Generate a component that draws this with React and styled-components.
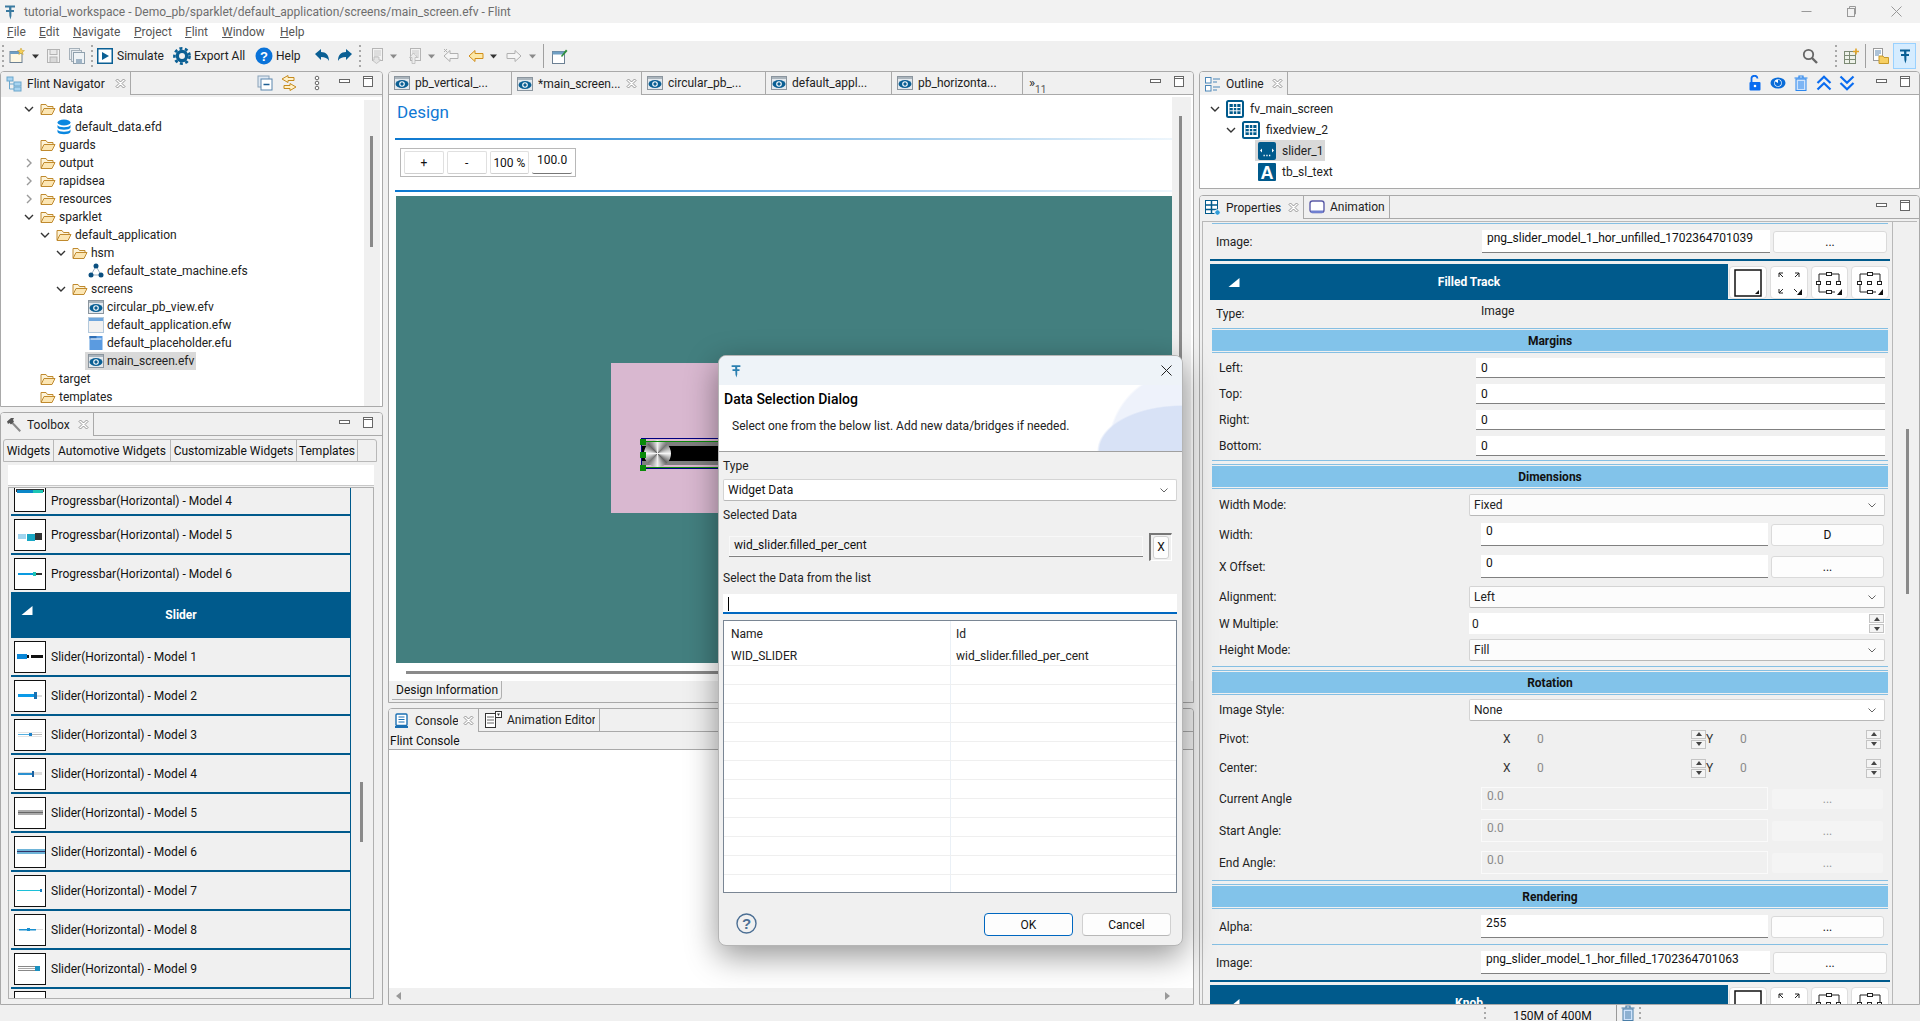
import React from 'react';
import styled, { createGlobalStyle } from 'styled-components';

const Global = createGlobalStyle`
  html, body { margin: 0; padding: 0; background: #f0f0f0; }
  body { font-family: Roboto, "Open Sans", "Liberation Sans", sans-serif; font-size: 12px; color: #111; }
  * { box-sizing: border-box; }
`

const BLUE = '#005a8c';

// ---- icons ----
const Svg = ({ s = 16, w, h, vb = '0 0 16 16', children }) => (
  <svg width={w || s} height={h || s} viewBox={vb} style={{ flex: 'none', display: 'block' }}>{children}</svg>
);
const FLogo = ({ s = 16, c = '#2a7fb0' }) => (
  <Svg s={s}>
    <path d="M3 1.5h10v2H3zM4 6h8v2H4zM7 3h2.4v9L8.4 15.5 7.4 12z" fill={c} />
  </Svg>
);
const Folder = () => (
  <Svg>
    <path d="M1 13V3.5h5l1.5 2h5.5V8" fill="#fdf3d8" stroke="#c08a2e" />
    <path d="M1 13.5l3-6h11l-3 6z" fill="#fce6b3" stroke="#c08a2e" />
  </Svg>
);
const EyeFile = () => (
  <Svg>
    <rect x=".5" y="1.5" width="15" height="13" fill="#e4e9ee" stroke="#8b959e" />
    <rect x="1" y="2" width="14" height="2" fill="#aab4bc" />
    <ellipse cx="8" cy="9" rx="6.5" ry="4" fill="#0a5f94" />
    <circle cx="8" cy="9" r="2.8" fill="#fff" />
    <circle cx="8" cy="9" r="1.7" fill="#0a5f94" />
  </Svg>
);
const Database = () => (
  <Svg>
    <ellipse cx="8" cy="3.5" rx="6.5" ry="3" fill="#0a87e0" />
    <path d="M1.5 6c1 3 12 3 13 0v2.5c-1 3-12 3-13 0zM1.5 10.5c1 3 12 3 13 0V13c-1 3-12 3-13 0z" fill="#0a87e0" />
  </Svg>
);
const StateMachine = () => (
  <Svg>
    <path d="M8 3L3 12h10z" fill="none" stroke="#9db3c4" />
    <circle cx="8" cy="3" r="2.5" fill="#0a4f80" />
    <circle cx="3" cy="12" r="2.5" fill="#0a4f80" />
    <circle cx="13" cy="12" r="2.5" fill="#0a4f80" />
  </Svg>
);
const WindowFile = () => (
  <Svg>
    <rect x=".5" y=".5" width="15" height="15" fill="#f1f1f1" stroke="#b4c9dc" />
    <rect x="1" y="1" width="14" height="3" fill="#6ea6dd" />
  </Svg>
);
const PlaceholderFile = () => (
  <Svg>
    <rect x="1.5" y="1" width="13" height="14" fill="#5b9be0" />
    <rect x="1.5" y="1" width="7" height="2.5" fill="#2f6fb5" />
    <rect x="2.5" y="3.5" width="11" height="1" fill="#fff" />
  </Svg>
);
const NavTitleIcon = () => (
  <Svg>
    <rect x="1" y="1" width="6" height="4" fill="#a8d4f0" stroke="#6aa6cc" />
    <rect x="8" y="6" width="7" height="4" fill="#a8d4f0" stroke="#6aa6cc" />
    <rect x="8" y="11" width="7" height="4" fill="#a8d4f0" stroke="#6aa6cc" />
    <path d="M3.5 5v8H8M3.5 8H8" fill="none" stroke="#6aa6cc" />
  </Svg>
);
const CloseX = () => (
  <Svg s={11} vb="0 0 11 11">
    <path d="M1 2.5L2.5 1 5.5 4 8.5 1 10 2.5 7 5.5l3 3L8.5 10l-3-3-3 3L1 8.5l3-3z" fill="#fff" stroke="#8a8a8a" strokeWidth=".9" />
  </Svg>
);
const MinIcon = () => (
  <Svg s={12} vb="0 0 12 12"><rect x=".5" y="3.5" width="10" height="3" fill="#fff" stroke="#666" /></Svg>
);
const MaxIcon = () => (
  <Svg s={12} vb="0 0 12 12"><rect x="1.5" y=".5" width="9" height="10" fill="#fff" stroke="#666" /><path d="M1.5 2.5h9" stroke="#666" /></Svg>
);
const ArrowDown = () => (
  <Svg s={10} vb="0 0 10 10"><path d="M1 3l4 4 4-4" fill="none" stroke="#333" strokeWidth="1.4" /></Svg>
);
const ArrowRight = () => (
  <Svg s={10} vb="0 0 10 10"><path d="M3 1l4 4-4 4" fill="none" stroke="#9a9a9a" strokeWidth="1.4" /></Svg>
);
const Caret = () => (
  <Svg w={7} h={5} vb="0 0 7 5"><path d="M0 .5h7L3.5 4.5z" fill="#333" /></Svg>
);
const GreyCaret = () => (
  <Svg w={7} h={5} vb="0 0 7 5"><path d="M0 .5h7L3.5 4.5z" fill="#8a8a8a" /></Svg>
);
const NewFile = () => (
  <Svg>
    <rect x="1" y="3.5" width="12" height="11" fill="#fff8e2" stroke="#6c8093" />
    <rect x="1" y="3.5" width="12" height="2.5" fill="#6f9fc4" />
    <path d="M12 0l1 2.4 2.5.2-2 1.6.7 2.4-2.2-1.4-2.2 1.4.7-2.4-2-1.6 2.5-.2z" fill="#f6cf57" stroke="#c69c28" strokeWidth=".5" />
  </Svg>
);
const Save = ({ x = 1 }) => (
  <g fill="#f2f2f2" stroke="#b3b3b3">
    <rect x={x + .5} y="1.5" width="12" height="13" />
    <rect x={x + 3} y="1.5" width="7" height="5" fill="#e8e8e8" />
    <rect x={x + 3} y="9" width="7" height="5.5" fill="#d8d8d8" />
  </g>
);
const SaveIcon = () => <Svg><Save /></Svg>;
const SaveAll = () => (
  <Svg>
    <rect x=".5" y=".5" width="10" height="11" fill="#e7ecf0" stroke="#a6b1ba" />
    <rect x="2.5" y="2.5" width="10" height="11" fill="#e7ecf0" stroke="#a6b1ba" />
    <rect x="4.5" y="4.5" width="11" height="11" fill="#eef2f5" stroke="#8fa0ad" />
    <rect x="7" y="11" width="6" height="4.5" fill="#9fb4c6" />
  </Svg>
);
const PlayBox = () => (
  <Svg>
    <rect x=".75" y=".75" width="14.5" height="14.5" fill="#fff" stroke="#0a5f94" strokeWidth="1.5" />
    <path d="M5 4l7 4-7 4z" fill="#0a5f94" />
  </Svg>
);
const Gear = () => (
  <Svg s={18} vb="0 0 18 18">
    <circle cx="9" cy="9" r="7.6" fill="none" stroke="#0a5f94" strokeWidth="2.6" strokeDasharray="3 2.5" />
    <circle cx="9" cy="9" r="6.3" fill="#0a5f94" />
    <circle cx="9" cy="9" r="3" fill="#f0f0f0" />
  </Svg>
);
const HelpRound = () => (
  <Svg s={18} vb="0 0 18 18">
    <circle cx="9" cy="9" r="8.5" fill="#0a73d9" />
    <text x="9" y="13.6" textAnchor="middle" fontSize="13" fontWeight="700" fontFamily="Liberation Sans" fill="#fff">?</text>
  </Svg>
);
const Undo = ({ flip }) => (
  <Svg>
    <g transform={flip ? 'translate(16 0) scale(-1 1)' : undefined}>
      <path d="M1 6l6-5v3c5 0 8 3 8 9-1.600-3-4-4-8-4v3z" fill="#0a5f94" />
    </g>
  </Svg>
);
const DimDoc = () => (
  <Svg>
    <rect x="3.500" y=".5" width="10" height="12" fill="#f3f3f3" stroke="#b5b5b5" />
    <path d="M5 3h7M5 5h7M5 7h7M5 9h4" stroke="#c8c8c8" />
    <path d="M5 9h5v3h2l-4.500 3.500L3 12h2z" fill="#e4e4e4" stroke="#b5b5b5" strokeWidth=".7" />
  </Svg>
);
const DimUp = () => (
  <Svg>
    <rect x="4.500" y=".5" width="10" height="12" fill="#f3f3f3" stroke="#b5b5b5" />
    <path d="M6 3h7M6 5h7M10 7h3M10 9h3" stroke="#c8c8c8" />
    <path d="M6 15.500v-6H3.500L7.500 5l4 4.500H9v6z" fill="#ececec" stroke="#b5b5b5" strokeWidth=".7" />
  </Svg>
);
const ArrowShape = ({ fill, stroke, right, tick }) => (
  <Svg>
    <g transform={right ? 'translate(16 0) scale(-1 1)' : undefined}>
      <path d="M1 8l6-5.500V5.500h8v5H7v3z" fill={fill} stroke={stroke} />
      {tick && <path d="M1 1l3 3M4 1L1 4" stroke={stroke} />}
    </g>
  </Svg>
);
const NewWindow = () => (
  <Svg>
    <rect x=".5" y="3.500" width="12" height="12" fill="#fff" stroke="#6c8093" />
    <rect x=".5" y="3.500" width="12" height="3" fill="#6f9fc4" />
    <path d="M9 8l5-6.500 1.500 1.500L10 9z" fill="#2f8f3e" />
  </Svg>
);
const Search = () => (
  <Svg>
    <circle cx="6.500" cy="6.500" r="4.700" fill="none" stroke="#666" strokeWidth="1.800" />
    <path d="M10 10l5 5" stroke="#666" strokeWidth="2.400" />
  </Svg>
);
const TableStar = () => (
  <Svg>
    <rect x=".5" y="3.500" width="11" height="12" fill="#eef2ea" stroke="#7d8b75" />
    <path d="M.5 7.500h11M.5 11.500h11M5.500 3.500v12" stroke="#7d8b75" />
    <path d="M12 .5v6M9 3.500h6" stroke="#e0a52a" strokeWidth="1.600" />
  </Svg>
);
const DocFolder = () => (
  <Svg>
    <rect x=".5" y=".5" width="9" height="12" fill="#fff" stroke="#9a9a9a" />
    <path d="M2 3h6M2 5h6M2 7h4" stroke="#5b86b0" />
    <path d="M6 8h4l1 1.500h4.500v6H6z" fill="#f7cf62" stroke="#c79a2a" />
  </Svg>
);
const SquareTree = () => (
  <Svg>
    <rect x=".5" y="1.500" width="5.500" height="5.500" fill="#fff" stroke="#4b86b8" />
    <rect x=".5" y="9.500" width="5.500" height="5.500" fill="#fff" stroke="#4b86b8" />
    <path d="M8 3h7M8 6h4M8 11h7M8 14h4" stroke="#4b86b8" />
  </Svg>
);
const ConsoleIcon = () => (
  <Svg>
    <rect x="2" y="1" width="11" height="11.500" rx="1" fill="#fff" stroke="#1a6fb3" strokeWidth="1.400" />
    <path d="M4.500 4h6M4.500 6.500h6M4.500 9h6" stroke="#1a6fb3" />
    <rect x="1" y="13" width="13" height="2" fill="#1a6fb3" />
  </Svg>
);
const AnimEditor = () => (
  <Svg s={18} vb="0 0 18 18">
    <rect x="1.500" y="2.500" width="10" height="14" fill="#fff" stroke="#333" />
    <path d="M3 6h7M3 9h7M3 12h7" stroke="#666" />
    <rect x="11.500" y=".5" width="6" height="6" fill="#fff" stroke="#333" />
    <path d="M13 2.500h3L14.500 5z" fill="#333" />
  </Svg>
);
const PropsIcon = () => (
  <Svg>
    <rect x=".5" y=".5" width="12" height="13" fill="#fff" stroke={BLUE} />
    <path d="M.5 5h12M.5 9.500h12M6.500.5v13" stroke={BLUE} strokeWidth="1.500" />
    <circle cx="12.500" cy="12.500" r="2.800" fill="#2f9bd8" stroke="#fff" />
  </Svg>
);
const AnimTab = () => (
  <Svg>
    <rect x="1" y="2" width="14" height="11.500" rx="2.500" fill="#fff" stroke="#5c5ca8" strokeWidth="1.400" />
    <rect x="2" y="11.500" width="12" height="2.500" fill="#6f7fd0" />
  </Svg>
);
const Hammer = () => (
  <Svg>
    <path d="M6 4l9 9.500-1.500 1.500L4.500 5.500z" fill="#8a8a8a" />
    <path d="M1 4.500L5 1h3L7 3l1 1.500L5 7.500 3.500 6 2 7z" fill="#555" />
  </Svg>
);
const CollapseAll = () => (
  <Svg>
    <rect x="1" y="1" width="11" height="11" fill="#dfe9f3" stroke="#8aa2b8" />
    <rect x="4" y="4" width="11" height="11" fill="#fff" stroke="#5a86ad" />
    <path d="M6.500 9.500h6" stroke="#1f5f94" strokeWidth="1.400" />
  </Svg>
);
const LinkEditor = () => (
  <Svg>
    <path d="M7 .5L1 4l6 3.500V5.500h6v-3H7z" fill="#fff1c9" stroke="#c58b1f" />
    <path d="M9 8.500l6 3.500-6 3.500v-2H3v-3h6z" fill="#fff1c9" stroke="#c58b1f" />
  </Svg>
);
const ViewMenu = () => (
  <Svg>
    <circle cx="8" cy="3" r="1.800" fill="#fff" stroke="#666" />
    <circle cx="8" cy="8" r="1.800" fill="#fff" stroke="#666" />
    <circle cx="8" cy="13" r="1.800" fill="#fff" stroke="#666" />
  </Svg>
);
const Lock = () => (
  <Svg>
    <path d="M4.500 7V4a3 3 0 0 1 6-.5" fill="none" stroke="#0a6cf0" strokeWidth="1.800" />
    <rect x="2.500" y="7" width="11" height="8.500" rx="1" fill="#0a6cf0" />
    <circle cx="8" cy="11" r="1.300" fill="#fff" />
  </Svg>
);
const EyeBlue = () => (
  <Svg>
    <ellipse cx="8" cy="8" rx="7.500" ry="5.500" fill="#0a6cd8" />
    <circle cx="8" cy="8" r="3.800" fill="#fff" />
    <path d="M8 4.800a3.200 3.200 0 1 1-2.800 1.700L8 8z" fill="#0a6cd8" />
  </Svg>
);
const TrashBlue = ({ c = '#2b86ee' }) => (
  <Svg>
    <path d="M1.500 3h13M6 3V1h4v2" fill="none" stroke={c} strokeWidth="1.200" />
    <rect x="3" y="4" width="10" height="11.500" fill="#cfe3fb" stroke={c} />
    <path d="M6 6v8M8 6v8M10 6v8" stroke={c} />
  </Svg>
);
const Chevrons = ({ down }) => (
  <Svg>
    <g transform={down ? 'translate(0 16) scale(1 -1)' : undefined} fill="none" stroke="#0a6cf0" strokeWidth="2.200">
      <path d="M1.500 8L8 1.800 14.500 8M1.500 14.500L8 8.300l6.500 6.200" />
    </g>
  </Svg>
);
const GridBlue = () => (
  <Svg s={18} vb="0 0 18 18">
    <rect x="1" y="1" width="16" height="16" rx="1.500" fill="#fff" stroke={BLUE} strokeWidth="2" />
    <path d="M3.500 4h11v10h-11z" fill={BLUE} />
    <path d="M3.500 7.500h11M3.500 10.800h11M7.300 4v10M10.800 4v10" stroke="#fff" />
  </Svg>
);
const SliderGlyph = () => (
  <Svg s={18} vb="0 0 18 18">
    <rect x="0" y="0" width="18" height="18" rx="2" fill={BLUE} />
    <path d="M4 6.500L2 8.500l2 2zM14 6.500l2 2-2 2z" fill="#fff" />
    <path d="M5.500 13.500h1.300M8.300 13.500h1.300M11 13.500h1.300" stroke="#fff" strokeWidth="1.500" />
  </Svg>
);
const TextGlyph = () => (
  <Svg s={18} vb="0 0 18 18">
    <rect x="0" y="0" width="18" height="18" rx="1" fill={BLUE} />
    <text x="9" y="16" textAnchor="middle" fontSize="18" fontWeight="700" fontFamily="Liberation Sans" fill="#fff">A</text>
  </Svg>
);
const ComboChevron = () => (
  <Svg s={10} vb="0 0 10 10"><path d="M1.500 3.500L5 7l3.500-3.500" fill="none" stroke="#666" /></Svg>
);
const WhiteCorner = () => (
  <Svg s={12} vb="0 0 12 12"><path d="M11.500 2v9H.5z" fill="#fff" /></Svg>
);
const ModeBlank = () => (
  <Svg s={28} vb="0 0 28 28">
    <rect x="1" y="1" width="26" height="26" fill="#fff" stroke="#111" strokeWidth="1.500" />
    <path d="M25 21v4h-4z" fill="#111" />
  </Svg>
);
const ModeExpand = () => (
  <Svg s={28} vb="0 0 28 28">
    <path d="M8 8l-4-4M4 8V4h4M20 8l4-4M20 4h4v4M8 20l-4 4M4 20v4h4M19 20l3 3" fill="none" stroke="#222" />
    <path d="M27 20v6h-5z" fill="#111" />
  </Svg>
);
const ModeAlign = () => (
  <Svg s={28} vb="0 0 28 28">
    <path d="M4 12V5h7M17 5h7v7M4 16v7h7M17 23h3" fill="none" stroke="#222" />
    <rect x="11.500" y="3.500" width="5" height="3" fill="#fff" stroke="#222" />
    <rect x="1.500" y="12.500" width="4" height="3" fill="#fff" stroke="#222" />
    <rect x="11.500" y="12.500" width="4" height="3" fill="#fff" stroke="#222" />
    <rect x="21.500" y="12.500" width="4" height="3" fill="#fff" stroke="#222" />
    <rect x="11.500" y="21.500" width="5" height="3" fill="#fff" stroke="#222" />
    <path d="M27 20v6h-5z" fill="#111" />
  </Svg>
);
const HelpOutline = () => (
  <Svg s={21} vb="0 0 21 21">
    <circle cx="10.500" cy="10.500" r="9.500" fill="none" stroke="#4c6f94" strokeWidth="1.400" />
    <text x="10.500" y="16" textAnchor="middle" fontSize="15" fontWeight="700" fontFamily="Liberation Sans" fill="#4c6f94">?</text>
  </Svg>
);
const DialogClose = () => (
  <Svg s={11} vb="0 0 11 11"><path d="M.5.500l10 10M10.500.500l-10 10" stroke="#222" /></Svg>
);
const WinMin = () => <Svg s={11} vb="0 0 11 11"><path d="M.5 5.500h10" stroke="#999" /></Svg>;
const WinRestore = () => (
  <Svg s={11} vb="0 0 11 11"><rect x="1.500" y="2.500" width="7" height="8" fill="none" stroke="#999" /><path d="M3.500 2.500V.5h6v7.500H8.500" fill="none" stroke="#999" /></Svg>
);
const WinClose = () => <Svg s={11} vb="0 0 11 11"><path d="M.5.500l10 10M10.500.500l-10 10" stroke="#999" /></Svg>;

const Thumb = ({ parts }) => (
  <ThumbBox>
    <svg width="30" height="30" viewBox="0 0 30 30">
      {parts.map((r, i) => <rect key={i} x={r[0]} y={r[1]} width={r[2]} height={r[3]} fill={r[4]} />)}
    </svg>
  </ThumbBox>
);

// ---- data ----
const treeRows = [
  { t: 'data', l: 0, open: true, icon: <Folder /> },
  { t: 'default_data.efd', l: 1, icon: <Database /> },
  { t: 'guards', l: 0, icon: <Folder />, leaf: true },
  { t: 'output', l: 0, closed: true, icon: <Folder /> },
  { t: 'rapidsea', l: 0, closed: true, icon: <Folder /> },
  { t: 'resources', l: 0, closed: true, icon: <Folder /> },
  { t: 'sparklet', l: 0, open: true, icon: <Folder /> },
  { t: 'default_application', l: 1, open: true, icon: <Folder /> },
  { t: 'hsm', l: 2, open: true, icon: <Folder /> },
  { t: 'default_state_machine.efs', l: 3, icon: <StateMachine /> },
  { t: 'screens', l: 2, open: true, icon: <Folder /> },
  { t: 'circular_pb_view.efv', l: 3, icon: <EyeFile /> },
  { t: 'default_application.efw', l: 3, icon: <WindowFile /> },
  { t: 'default_placeholder.efu', l: 3, icon: <PlaceholderFile /> },
  { t: 'main_screen.efv', l: 3, icon: <EyeFile />, sel: true },
  { t: 'target', l: 0, icon: <Folder /> },
  { t: 'templates', l: 0, icon: <Folder /> },
  { t: '', l: 0, icon: <Folder /> },
];

const pb4 = [[1, 8, 28, 3, '#333'], [2, 9, 18, 3, '#0a87c8'], [18, 9, 10, 3, '#1cc5b5']];
const widgetsTop = [
  { t: 'Progressbar(Horizontal) - Model 5', parts: [[3, 14, 8, 5, '#9fd4ef'], [12, 14, 8, 7, '#18a7c4'], [20, 13, 7, 7, '#333']] },
  { t: 'Progressbar(Horizontal) - Model 6', parts: [[3, 14, 18, 2, '#0a9ae0'], [18, 13, 3, 4, '#1cc5b5'], [21, 14, 6, 2, '#333']] },
];
const sliders = [
  { parts: [[2, 13, 26, 3, '#111'], [2, 12, 10, 5, '#0a87d8'], [14, 12, 2, 5, '#fff']] },
  { parts: [[3, 14, 24, 2, '#ddd'], [3, 13, 17, 3, '#0a9ae8'], [19, 11, 3, 7, '#1a70b0']] },
  { parts: [[3, 14, 24, 1, '#bbb'], [3, 12, 24, 1, '#e4e4e4'], [3, 16, 24, 1, '#e4e4e4'], [14, 13, 3, 3, '#1a80c8'], [3, 14, 11, 1, '#55b0e0']] },
  { parts: [[3, 13, 24, 3, '#ddd'], [3, 14, 15, 2, '#2a90d0'], [17, 12, 2, 6, '#1a60a0']] },
  { parts: [[3, 12, 25, 5, '#aaa'], [3, 14, 25, 1, '#666']] },
  { parts: [[2, 12, 28, 5, '#6eb4d8'], [2, 14, 28, 1, '#336']] },
  { parts: [[2, 14, 25, 1, '#1cc0d8'], [25, 13, 2, 3, '#1a80c0']] },
  { parts: [[2, 14, 26, 1, '#ddd'], [4, 14, 17, 1.500, '#1a90d0'], [12, 13, 3, 3, '#1a90d0']] },
  { parts: [[3, 12, 18, 1, '#888'], [3, 16, 18, 1, '#888'], [3, 14, 22, 1, '#aaa'], [20, 12, 5, 5, '#1a90c0']] },
];

const tableRows = Array.from({ length: 13 });

// ---- page ----
export default function App() {
  return (
    <Page>
      <Global />
      <TitleBar>
        <FLogo c="#3a7aa0" />
        <TitleText>tutorial_workspace - Demo_pb/sparklet/default_application/screens/main_screen.efv - Flint</TitleText>
        <WinButtons><WinMin /><WinRestore /><WinClose /></WinButtons>
      </TitleBar>
      <MenuBar>
        {['File', 'Edit', 'Navigate', 'Project', 'Flint', 'Window', 'Help'].map((m, i) => (
          <MenuItem key={m} $w={[32, 34, 61, 51, 37, 58, 30][i]}>{m}</MenuItem>
        ))}
      </MenuBar>
      <Toolbar>
        <Tool $ml={2}><Grip /></Tool>
        <Tool $ml={5}><NewFile /></Tool>
        <Tool $ml={7}><Caret /></Tool>
        <Tool $ml={7}><SaveIcon /></Tool>
        <Tool $ml={7}><SaveAll /></Tool>
        <Tool $ml={6}><Grip /></Tool>
        <Tool $ml={4}><PlayBox /></Tool>
        <ToolLabel $ml={4} $w={48}>Simulate</ToolLabel>
        <Tool $ml={8}><Gear /></Tool>
        <ToolLabel $ml={3} $w={52}>Export All</ToolLabel>
        <Tool $ml={9}><HelpRound /></Tool>
        <ToolLabel $ml={3} $w={28}>Help</ToolLabel>
        <Tool $ml={10}><Undo /></Tool>
        <Tool $ml={7}><Undo flip /></Tool>
        <Tool $ml={6}><Grip /></Tool>
        <Tool $ml={8}><DimDoc /></Tool>
        <Tool $ml={5}><GreyCaret /></Tool>
        <Tool $ml={9}><DimUp /></Tool>
        <Tool $ml={6}><GreyCaret /></Tool>
        <Tool $ml={8}><ArrowShape fill="#f5f5f5" stroke="#b0b0b0" tick /></Tool>
        <Tool $ml={9}><ArrowShape fill="#fde9a8" stroke="#d18f1c" /></Tool>
        <Tool $ml={6}><Caret /></Tool>
        <Tool $ml={9}><ArrowShape fill="#f5f5f5" stroke="#b0b0b0" right /></Tool>
        <Tool $ml={7}><GreyCaret /></Tool>
        <ToolSep $ml={7} />
        <Tool $ml={8}><NewWindow /></Tool>
        <ToolRight>
          <Tool $ml={0}><Search /></Tool>
          <Tool $ml={17}><Grip /></Tool>
          <Tool $ml={7}><TableStar /></Tool>
          <ToolSep $ml={5} />
          <Tool $ml={7}><DocFolder /></Tool>
          <ActivePerspective><FLogo c="#0a5f94" /></ActivePerspective>
        </ToolRight>
      </Toolbar>

      <Workspace>
        <Column $w={383}>
          <Panel $h={336}>
            <TabBar>
              <Tab $w={130} $active><NavTitleIcon /><TabText>Flint Navigator</TabText><CloseX /></Tab>
              <TabTools>
                <Tool $ml={0}><CollapseAll /></Tool>
                <Tool $ml={8}><LinkEditor /></Tool>
                <Tool $ml={12}><ViewMenu /></Tool>
                <MinMax><MinIcon /><MaxIcon /></MinMax>
              </TabTools>
            </TabBar>
            <ScrollArea $pt={3}>
              <TreeList>
                {treeRows.map((r, i) => (
                  <TreeRow key={i} $l={r.l} $h={18}>
                    <ArrowSlot>
                      {r.open && <ArrowDown />}
                      {r.closed && <ArrowRight />}
                    </ArrowSlot>
                    <RowBody $sel={r.sel}>{r.icon}<span>{r.t}</span></RowBody>
                  </TreeRow>
                ))}
              </TreeList>
              <ScrollGutter $w={16}><VThumb $mt={36} $h={111} /></ScrollGutter>
            </ScrollArea>
          </Panel>

          <Panel $h={593}>
            <TabBar>
              <Tab $w={93} $active><Hammer /><TabText>Toolbox</TabText><CloseX /></Tab>
              <TabTools><MinMax><MinIcon /><MaxIcon /></MinMax></TabTools>
            </TabBar>
            <ToolboxBody>
              <PaletteTabs>
                <PaletteTab $w={50} $active>Widgets</PaletteTab>
                <PaletteTab $w={117}>Automotive Widgets</PaletteTab>
                <PaletteTab $w={126}>Customizable Widgets</PaletteTab>
                <PaletteTab $w={61}>Templates</PaletteTab>
              </PaletteTabs>
              <PaletteSearch />
              <PaletteList>
                <PaletteItems>
                  <PartialItem $first>
                    <PartialThumb $first><svg width="30" height="20" viewBox="0 0 30 20">{pb4.map((r, i) => <rect key={i} x={r[0]} y={r[1] - 7} width={r[2]} height={r[3]} fill={r[4]} />)}</svg></PartialThumb>
                    <ItemText>Progressbar(Horizontal) - Model 4</ItemText>
                  </PartialItem>
                  {widgetsTop.map(w => (
                    <Item key={w.t}><Thumb parts={w.parts} /><ItemText>{w.t}</ItemText></Item>
                  ))}
                  <GroupHeader><CornerSlot><WhiteCorner /></CornerSlot>Slider</GroupHeader>
                  {sliders.map((s, i) => (
                    <Item key={i}><Thumb parts={s.parts} /><ItemText>Slider(Horizontal) - Model {i + 1}</ItemText></Item>
                  ))}
                  <PartialItem><PartialThumb><svg width="30" height="8" viewBox="0 0 30 8"><rect x="14" y="3" width="3" height="5" fill="#1a80c8" /></svg></PartialThumb></PartialItem>
                </PaletteItems>
                <ScrollGutter $w={20}><VThumb $mt={294} $h={60} $ml={9} /></ScrollGutter>
              </PaletteList>
            </ToolboxBody>
          </Panel>
        </Column>

        <Column $w={806}>
          <Panel $h={632}>
            <TabBar>
              <Tab $w={123}><EyeFile /><TabText>pb_vertical_...</TabText></Tab>
              <Tab $w={130} $active><EyeFile /><TabText>*main_screen...</TabText><CloseX /></Tab>
              <Tab $w={124}><EyeFile /><TabText>circular_pb_...</TabText></Tab>
              <Tab $w={126}><EyeFile /><TabText>default_appl...</TabText></Tab>
              <Tab $w={131}><EyeFile /><TabText>pb_horizonta...</TabText></Tab>
              <Overflow>»<sub>11</sub></Overflow>
              <TabTools><MinMax><MinIcon /><MaxIcon /></MinMax></TabTools>
            </TabBar>
            <EditorBody>
              <EditorMain>
                <DesignTitle>Design</DesignTitle>
                <BlueRule />
                <ZoomBar>
                  <ZoomBox>
                    <ZoomButton>+</ZoomButton>
                    <ZoomButton>-</ZoomButton>
                    <ZoomButton>100 %</ZoomButton>
                    <ZoomField>100.0</ZoomField>
                  </ZoomBox>
                </ZoomBar>
                <BlueRule />
                <Canvas>
                  <Artboard>
                    <SliderWidget>
                      <Knob />
                      <Handle $top={0} />
                      <Handle $top={13} />
                      <Handle $top={26} />
                    </SliderWidget>
                  </Artboard>
                </Canvas>
                <HScrollLine />
              </EditorMain>
              <ScrollGutter $w={19}><VThumb $mt={19} $h={520} $ml={7} /></ScrollGutter>
            </EditorBody>
            <BottomTabs>
              <BottomTab>Design Information</BottomTab>
            </BottomTabs>
          </Panel>

          <Panel $h={297}>
            <TabBar>
              <Tab $w={90} $active><ConsoleIcon /><TabText>Console</TabText><CloseX /></Tab>
              <Tab $w={121}><AnimEditor /><TabText>Animation Editor</TabText></Tab>
            </TabBar>
            <ConsoleTitle>Flint Console</ConsoleTitle>
            <ConsoleBody />
            <ConsoleScroll>
              <Svg s={8} vb="0 0 8 8"><path d="M6 0v8L1 4z" fill="#999" /></Svg>
              <Svg s={8} vb="0 0 8 8"><path d="M2 0v8l5-4z" fill="#999" /></Svg>
            </ConsoleScroll>
          </Panel>
        </Column>

        <Column $w={721}>
          <Panel $h={118}>
            <TabBar>
              <Tab $w={88} $active><SquareTree /><TabText>Outline</TabText><CloseX /></Tab>
              <TabTools $gap={7}>
                <Lock /><EyeBlue /><TrashBlue /><Chevrons /><Chevrons down />
                <MinMax><MinIcon /><MaxIcon /></MinMax>
              </TabTools>
            </TabBar>
            <OutlineBody>
              <OutlineRow $l={0}><ArrowSlot><ArrowDown /></ArrowSlot><GridBlue /><OutlineText>fv_main_screen</OutlineText></OutlineRow>
              <OutlineRow $l={1}><ArrowSlot><ArrowDown /></ArrowSlot><GridBlue /><OutlineText>fixedview_2</OutlineText></OutlineRow>
              <OutlineRow $l={2}><ArrowSlot /><RowBody $sel $gap={6}><SliderGlyph /><span>slider_1</span></RowBody></OutlineRow>
              <OutlineRow $l={2}><ArrowSlot /><RowBody $gap={6}><TextGlyph /><span>tb_sl_text</span></RowBody></OutlineRow>
            </OutlineBody>
          </Panel>

          <Panel $h={810} $mt={6}>
            <TabBar>
              <Tab $w={104} $active><PropsIcon /><TabText>Properties</TabText><CloseX /></Tab>
              <Tab $w={86}><AnimTab /><TabText>Animation</TabText></Tab>
              <TabTools><MinMax><MinIcon /><MaxIcon /></MinMax></TabTools>
            </TabBar>
            <PropsFrame>
              <PropsForm>
                <LightLine />
                <PropRow $h={35} $indent={6}>
                  <PropLabel $w={266}>Image:</PropLabel>
                  <TextField $w={288}>png_slider_model_1_hor_unfilled_1702364701039</TextField>
                  <DotsButton $w={114}>...</DotsButton>
                </PropRow>
                <DarkHeader title="Filled Track" />
                <PropRow $h={28} $indent={6}>
                  <PropLabel $w={265}>Type:</PropLabel>
                  <PlainValue>Image</PlainValue>
                </PropRow>
                <SectionHeader>Margins</SectionHeader>
                <FormGap $h={2} />
                {['Left:', 'Top:', 'Right:', 'Bottom:'].map(l => (
                  <PropRow key={l} $h={26}>
                    <PropLabel $w={257}>{l}</PropLabel>
                    <TextField $w={409} $h={20} $center>0</TextField>
                  </PropRow>
                ))}
                <FormGap $h={1} />
                <LightLine />
                <FormGap $h={3} />
                <SectionHeader>Dimensions</SectionHeader>
                <ComboRow h={31} label="Width Mode:" value="Fixed" tint />
                <FieldRow h={29} label="Width:" value="0" btn="D" />
                <FieldRow h={35} label="X Offset:" value="0" btn="..." />
                <ComboRow h={25} label="Alignment:" value="Left" tint />
                <PropRow $h={29}>
                  <PropLabel $w={250}>W Multiple:</PropLabel>
                  <SpinField><span>0</span><Spinner /></SpinField>
                </PropRow>
                <ComboRow h={24} label="Height Mode:" value="Fill" tint />
                <FormGap $h={4} />
                <LightLine />
                <FormGap $h={3} />
                <SectionHeader>Rotation</SectionHeader>
                <ComboRow h={30} label="Image Style:" value="None" />
                <XYRow h={28} label="Pivot:" />
                <XYRow h={30} label="Center:" />
                <FieldRow h={31} label="Current Angle" value="0.0" btn="..." off />
                <FieldRow h={33} label="Start Angle:" value="0.0" btn="..." off />
                <FieldRow h={31} label="End Angle:" value="0.0" btn="..." off />
                <FormGap $h={2} />
                <LightLine />
                <FormGap $h={3} />
                <SectionHeader>Rendering</SectionHeader>
                <FieldRow h={35} label="Alpha:" value="255" btn="..." />
                <LightLine />
                <PropRow $h={35} $indent={6}>
                  <PropLabel $w={265}>Image:</PropLabel>
                  <TextField $w={289} $h={23}>png_slider_model_1_hor_filled_1702364701063</TextField>
                  <DotsButton $w={114} $h={22}>...</DotsButton>
                </PropRow>
                <DarkHeader title="Knob" />
              </PropsForm>
              <ScrollGutter $w={19}><VThumb $mt={207} $h={165} $ml={12} /></ScrollGutter>
            </PropsFrame>
          </Panel>
        </Column>
      </Workspace>

      <StatusBar>
        <Grip />
        <MemoryBar><MemoryFill />150M of 400M</MemoryBar>
        <TrashBlue c="#4a7ea8" />
        <Grip />
      </StatusBar>

      <Dialog>
        <DialogTitleBar>
          <FLogo s={14} c="#2a7fb0" />
          <DialogClose />
        </DialogTitleBar>
        <DialogHeader>
          <DialogHeading>Data Selection Dialog</DialogHeading>
          <DialogDesc>Select one from the below list. Add new data/bridges if needed.</DialogDesc>
        </DialogHeader>
        <DialogBody>
          <FieldCaption $h={27}>Type</FieldCaption>
          <DialogCombo>Widget Data<ComboChevron /></DialogCombo>
          <FieldCaption $h={28}>Selected Data</FieldCaption>
          <SelectedRow>
            <SelectedField>wid_slider.filled_per_cent</SelectedField>
            <ClearButton><span>X</span></ClearButton>
          </SelectedRow>
          <FieldCaption $h={32}>Select the Data from the list</FieldCaption>
          <SearchField><Cursor /></SearchField>
          <DataTable>
            <TableHead><Cell>Name</Cell><Cell $sep>Id</Cell></TableHead>
            <TableRow><Cell>WID_SLIDER</Cell><Cell $sep>wid_slider.filled_per_cent</Cell></TableRow>
            {tableRows.map((_, i) => (
              <TableRow key={i} $empty={i === 12}><Cell /><Cell $sep /></TableRow>
            ))}
          </DataTable>
          <DialogFooter>
            <HelpOutline />
            <FooterButtons>
              <PushButton $primary>OK</PushButton>
              <PushButton>Cancel</PushButton>
            </FooterButtons>
          </DialogFooter>
        </DialogBody>
      </Dialog>
    </Page>
  );
}

const DarkHeader = ({ title }) => (
  <DarkBlock>
    <DarkBand>
      <CornerSlot $left={18}><WhiteCorner /></CornerSlot>
      <DarkTitle>{title}</DarkTitle>
      <ModeButtons>
        <ModeButton><ModeBlank /></ModeButton>
        <ModeButton><ModeExpand /></ModeButton>
        <ModeButton><ModeAlign /></ModeButton>
        <ModeButton><ModeAlign /></ModeButton>
      </ModeButtons>
    </DarkBand>
  </DarkBlock>
);

const ComboRow = ({ h, label, value, tint }) => (
  <PropRow $h={h}>
    <PropLabel $w={250}>{label}</PropLabel>
    <Combo $tint={tint}>{value}<ComboChevron /></Combo>
  </PropRow>
);

const FieldRow = ({ h, label, value, btn, off }) => (
  <PropRow $h={h}>
    <PropLabel $w={262}>{label}</PropLabel>
    <TextField $w={287} $h={23} $off={off}>{value}</TextField>
    <DotsButton $w={113} $h={22} $off={off}>{btn}</DotsButton>
  </PropRow>
);

const Spinner = () => (
  <SpinButtons>
    <SpinCell><Svg s={6} vb="0 0 6 6"><path d="M0 5h6L3 1z" fill="#444" /></Svg></SpinCell>
    <SpinCell><Svg s={6} vb="0 0 6 6"><path d="M0 1h6L3 5z" fill="#444" /></Svg></SpinCell>
  </SpinButtons>
);

const XYRow = ({ h, label }) => (
  <PropRow $h={h}>
    <PropLabel $w={284}>{label}</PropLabel>
    <AxisCell $w={203}><AxisName>X</AxisName><AxisValue>0</AxisValue><Spinner /></AxisCell>
    <AxisCell $w={175}><AxisName $wide>Y</AxisName><AxisValue>0</AxisValue><Spinner /></AxisCell>
  </PropRow>
);

const Page = styled.div`
  position: relative;
  width: 1920px;
  height: 1021px;
  overflow: hidden;
  display: flex;
  flex-direction: column;
  background: #f0f0f0;
`

const TitleBar = styled.div`
  height: 23px;
  display: flex;
  align-items: center;
  padding-left: 2px;
  background: #f2f2f2;
`

const TitleText = styled.div`
  margin-left: 6px;
  color: #6e6e6e;
  white-space: nowrap;
`

const WinButtons = styled.div`
  margin-left: auto;
  width: 119px;
  padding-right: 18px;
  display: flex;
  justify-content: space-between;
  align-items: center;
`

const MenuBar = styled.div`
  height: 18px;
  display: flex;
  align-items: center;
  padding-left: 7px;
  background: #fff;
`

const MenuItem = styled.div`
  width: ${p => p.$w}px;
  color: #555;
  &::first-letter { text-decoration: underline; }
`

const Toolbar = styled.div`
  height: 30px;
  display: flex;
  align-items: center;
  background: #f0f0f0;
`

const Tool = styled.div`
  flex: none;
  margin-left: ${p => p.$ml}px;
  display: flex;
  align-items: center;
`

const ToolLabel = styled.div`
  flex: none;
  width: ${p => p.$w}px;
  margin-left: ${p => p.$ml}px;
  color: #222;
  white-space: nowrap;
`

const ToolRight = styled.div`
  margin-left: auto;
  display: flex;
  align-items: center;
  padding-right: 4px;
`

const Grip = styled.div`
  flex: none;
  width: 2px;
  height: 22px;
  background: repeating-linear-gradient(to bottom, #a8a8a8 0 2px, transparent 2px 5px);
`

const ToolSep = styled.div`
  flex: none;
  width: 1px;
  height: 24px;
  margin-left: ${p => p.$ml}px;
  background: #a0a0a0;
`

const ActivePerspective = styled.div`
  flex: none;
  margin-left: 4px;
  width: 23px;
  height: 26px;
  display: flex;
  align-items: center;
  justify-content: center;
  background: #d5ecff;
  border: 1px solid #99d1ff;
`

const Workspace = styled.div`
  height: 934px;
  display: flex;
  gap: 5px;
`

const Column = styled.div`
  flex: none;
  width: ${p => p.$w}px;
  display: flex;
  flex-direction: column;
  gap: 5px;
  & + & { }
`

const Panel = styled.section`
  flex: none;
  height: ${p => p.$h}px;
  margin-top: ${p => (p.$mt ? p.$mt - 5 : 0)}px;
  display: flex;
  flex-direction: column;
  overflow: hidden;
  background: #f0f0f0;
  border: 1px solid #a9a9a9;
  border-radius: 4px 4px 0 0;
`

const TabBar = styled.div`
  flex: none;
  height: 23px;
  display: flex;
  background: #f0f0f0;
  border-bottom: 1px solid #a9a9a9;
`

const Tab = styled.div`
  flex: none;
  width: ${p => p.$w}px;
  height: ${p => (p.$active ? 23 : 22)}px;
  padding: 0 4px 0 5px;
  display: flex;
  align-items: center;
  gap: 5px;
  white-space: nowrap;
  color: #222;
  background: #f0f0f0;
  border-right: 1px solid #a9a9a9;
  position: relative;
`

const TabText = styled.span`
  flex: 1;
  overflow: hidden;
`

const TabTools = styled.div`
  margin-left: auto;
  display: flex;
  align-items: center;
  gap: ${p => p.$gap || 0}px;
  padding-right: 8px;
`

const MinMax = styled.div`
  margin-left: 14px;
  display: flex;
  gap: 11px;
  align-self: flex-start;
  padding-top: 4px;
`

const Overflow = styled.div`
  margin-left: 6px;
  padding-top: 3px;
  font-size: 13px;
  color: #222;
  sub { font-size: 10px; color: #555; vertical-align: -6px; }
`

const ScrollArea = styled.div`
  flex: 1;
  min-height: 0;
  display: flex;
  background: #fff;
  margin-top: 2px;
  padding-top: ${p => p.$pt}px;
`

const TreeList = styled.div`
  flex: 1;
  overflow: hidden;
`

const TreeRow = styled.div`
  height: ${p => p.$h}px;
  display: flex;
  align-items: center;
  padding-left: ${p => 23 + p.$l * 16}px;
  color: #222;
  white-space: nowrap;
`

const ArrowSlot = styled.div`
  flex: none;
  width: 16px;
  display: flex;
`

const RowBody = styled.div`
  display: flex;
  align-items: center;
  gap: ${p => p.$gap || 3}px;
  height: 100%;
  padding-right: 2px;
  margin-left: ${p => (p.$sel ? -3 : 0)}px;
  padding-left: ${p => (p.$sel ? 3 : 0)}px;
  background: ${p => (p.$sel ? '#d9d9d9' : 'transparent')};
`

const ScrollGutter = styled.div`
  flex: none;
  width: ${p => p.$w}px;
  background: #f0f0f0;
  margin-right: 2px;
`

const VThumb = styled.div`
  width: 3px;
  height: ${p => p.$h}px;
  margin: ${p => p.$mt}px 0 0 ${p => p.$ml || 6}px;
  background: #8a8a8a;
`

const ToolboxBody = styled.div`
  flex: 1;
  min-height: 0;
  padding: 3px 5px 5px 2px;
  display: flex;
  flex-direction: column;
`

const PaletteTabs = styled.div`
  flex: none;
  height: 23px;
  display: flex;
  border: 1px solid #b8b8b8;
  border-bottom: 1px solid #b8b8b8;
  border-radius: 3px 3px 0 0;
`

const PaletteTab = styled.div`
  flex: none;
  width: ${p => p.$w}px;
  display: flex;
  align-items: center;
  justify-content: center;
  white-space: nowrap;
  color: #111;
  border-right: 1px solid #b8b8b8;
`

const PaletteSearch = styled.div`
  flex: none;
  height: 21px;
  margin: 3px 3px 0 5px;
  background: #fff;
  border-bottom: 1px solid #c8c8c8;
`

const PaletteList = styled.div`
  flex: 1;
  min-height: 0;
  margin: 1px 3px 0 5px;
  display: flex;
  border: 1px solid #b0b0b0;
  background: #f0f0f0;
  overflow: hidden;
`

const PaletteItems = styled.div`
  flex: 1;
  padding-left: 2px;
  overflow: hidden;
`

const Item = styled.div`
  height: 39px;
  display: flex;
  align-items: center;
  padding-left: 3px;
  border-bottom: 2px solid ${BLUE};
  border-right: 1px solid ${BLUE};
`

const PartialItem = styled(Item)`
  height: ${p => (p.$first ? 28 : 11)}px;
  align-items: ${p => (p.$first ? 'center' : 'flex-start')};
  padding-top: ${p => (p.$first ? 0 : 2)}px;
  border-bottom: ${p => (p.$first ? `2px solid ${BLUE}` : 'none')};
`

const ThumbBox = styled.div`
  flex: none;
  width: 32px;
  height: 32px;
  background: #fff;
  border: 1px solid #111;
`

const PartialThumb = styled(ThumbBox)`
  height: ${p => (p.$first ? 24 : 10)}px;
  border-top: ${p => (p.$first ? 'none' : '1px solid #111')};
  border-bottom: ${p => (p.$first ? '1px solid #111' : 'none')};
  overflow: hidden;
  align-self: ${p => (p.$first ? 'flex-start' : 'auto')};
`

const ItemText = styled.div`
  margin-left: 5px;
  color: #111;
  white-space: nowrap;
`

const GroupHeader = styled.div`
  position: relative;
  height: 46px;
  margin-top: -2px;
  display: flex;
  align-items: center;
  justify-content: center;
  font-weight: 700;
  color: #fff;
  background: ${BLUE};
`

const CornerSlot = styled.div`
  position: absolute;
  left: ${p => p.$left || 10}px;
  top: 12px;
`

const EditorBody = styled.div`
  flex: 1;
  min-height: 0;
  display: flex;
  padding-top: 2px;
  background: #fff;
`

const EditorMain = styled.div`
  flex: 1;
  min-width: 0;
  display: flex;
  flex-direction: column;
  padding: 0 0 0 6px;
`

const DesignTitle = styled.div`
  height: 41px;
  padding: 5px 0 0 2px;
  font-size: 17px;
  color: #0f78d4;
`

const BlueRule = styled.div`
  flex: none;
  height: 2px;
  background: linear-gradient(to right, #0b78d0, #a9d0ee 70%, #eef6fc);
`

const ZoomBar = styled.div`
  flex: none;
  height: 50px;
  padding: 8px 0 0 5px;
`

const ZoomBox = styled.div`
  width: 176px;
  height: 29px;
  padding: 2px 3px;
  display: flex;
  gap: 3px;
  border: 1px solid #b8b8b8;
`

const ZoomButton = styled.div`
  width: 40px;
  display: flex;
  align-items: center;
  justify-content: center;
  background: #fff;
  border: 1px solid #e0e0e0;
  border-bottom: 1px solid #cfcfcf;
  border-radius: 2px;
`

const ZoomField = styled(ZoomButton)`
  padding-bottom: 4px;
  border: none;
  border-bottom: 1px solid #777;
`

const Canvas = styled.div`
  flex: 1;
  min-height: 0;
  margin: 4px 0 0 1px;
  padding: 167px 0 0 215px;
  background: #437f7f;
  overflow: hidden;
`

const Artboard = styled.div`
  width: 349px;
  height: 150px;
  padding: 75px 0 0 30px;
  background: #d9b8d0;
`

const SliderWidget = styled.div`
  position: relative;
  width: 260px;
  height: 31px;
  background: linear-gradient(to bottom, #808080 0 7px, #000 7px 22px, #808080 22px 28px, #fff 28px);
  background-clip: padding-box;
  border: 1px solid #000080;
  box-shadow: inset 0 2px 0 #dcb8d0, inset 0 -3px 0 #dcb8d0;
`

const Knob = styled.div`
  position: absolute;
  left: 2px;
  top: 1px;
  width: 27px;
  height: 27px;
  border-radius: 50%;
  background: conic-gradient(#eee, #777, #f5f5f5, #666, #eee, #777, #f5f5f5, #666, #eee);
`

const Handle = styled.div`
  position: absolute;
  left: -2px;
  top: ${p => p.$top}px;
  width: 6px;
  height: 6px;
  background: #0a8a0a;
  &::after {
    content: '';
    display: ${p => (p.$top === 13 ? 'none' : 'block')};
    position: absolute;
    left: 0;
    top: 2px;
    width: 260px;
    height: 1px;
    background: #0a8a0a;
  }
`

const HScrollLine = styled.div`
  flex: none;
  height: 3px;
  margin: 8px 0 7px 11px;
  background: #8a8a8a;
`

const BottomTabs = styled.div`
  flex: none;
  height: 21px;
  padding: 0 3px;
  background: #f0f0f0;
  display: flex;
`

const BottomTab = styled.div`
  width: 110px;
  height: 19px;
  display: flex;
  align-items: center;
  padding-left: 4px;
  white-space: nowrap;
  border: 1px solid #b0b0b0;
  border-top: none;
  border-left: none;
  border-radius: 0 0 4px 0;
`

const ConsoleTitle = styled.div`
  flex: none;
  height: 18px;
  padding-left: 1px;
  display: flex;
  align-items: center;
  border-bottom: 1px solid #a9a9a9;
  background: #f0f0f0;
`

const ConsoleBody = styled.div`
  flex: 1;
  background: #fff;
`

const ConsoleScroll = styled.div`
  flex: none;
  height: 16px;
  padding: 0 22px 0 6px;
  display: flex;
  align-items: center;
  justify-content: space-between;
  background: #f0f0f0;
`

const OutlineBody = styled.div`
  flex: 1;
  padding-top: 3px;
  background: #fff;
`

const OutlineRow = styled.div`
  height: 21px;
  display: flex;
  align-items: center;
  padding-left: ${p => 10 + p.$l * 16}px;
  color: #222;
`

const OutlineText = styled.span`
  margin-left: 6px;
`

const PropsFrame = styled.div`
  flex: 1;
  min-height: 0;
  margin: 2px 2px 0 2px;
  display: flex;
  background: #f0f0f0;
  border-left: 1px solid #b8b8b8;
  border-top: 1px solid #b8b8b8;
`

const PropsForm = styled.div`
  width: 690px;
  margin-right: 1px;
  flex: none;
  padding: 1px 2px 0 7px;
  border-right: 1px solid #b8b8b8;
  overflow: hidden;
`

const LightLine = styled.div`
  height: 1px;
  margin: 0 2px;
  background: #85bfe3;
`

const FormGap = styled.div`
  height: ${p => p.$h}px;
`

const PropRow = styled.div`
  height: ${p => p.$h}px;
  display: flex;
  align-items: center;
  padding-left: ${p => p.$indent || 9}px;
  color: #222;
`

const PropLabel = styled.div`
  flex: none;
  width: ${p => p.$w}px;
`

const TextField = styled.div`
  flex: none;
  width: ${p => p.$w}px;
  height: ${p => p.$h || 23}px;
  padding: ${p => (p.$center ? '3px' : '1px')} 5px 0;
  white-space: nowrap;
  overflow: hidden;
  color: ${p => (p.$off ? '#8a8a8a' : '#111')};
  background: ${p => (p.$off ? '#f0f0f0' : '#fff')};
  border: ${p => (p.$off ? '1px solid #fafafa' : 'none')};
  border-bottom: 1px solid ${p => (p.$off ? '#fafafa' : '#808080')};
`

const DotsButton = styled.div`
  flex: none;
  width: ${p => p.$w}px;
  height: ${p => p.$h || 22}px;
  margin-left: 3px;
  display: flex;
  align-items: center;
  justify-content: center;
  color: ${p => (p.$off ? '#9a9a9a' : '#111')};
  background: ${p => (p.$off ? '#f4f4f4' : '#fdfdfd')};
  border: 1px solid ${p => (p.$off ? '#f0f0f0' : '#dadada')};
  border-radius: 3px;
`

const PlainValue = styled.div`
  padding-bottom: 6px;
`

const DarkBlock = styled.div`
  height: 41px;
  padding: 3px 0 1px;
  border-top: 2px solid ${BLUE};
  border-bottom: 2px solid ${BLUE};
  flex: none;
`

const DarkBand = styled.div`
  position: relative;
  height: 35px;
  display: flex;
  align-items: center;
  background: ${BLUE};
`

const DarkTitle = styled.div`
  width: 518px;
  text-align: center;
  color: #fff;
  font-weight: 700;
`

const ModeButtons = styled.div`
  flex: 1;
  height: 100%;
  display: flex;
  gap: 3px;
  padding: 2px 1px 0;
  background: #f0f0f0;
`

const ModeButton = styled.div`
  flex: 1;
  display: flex;
  align-items: center;
  justify-content: center;
  background: #fff;
  border: 1px solid #dedede;
  border-radius: 4px;
`

const SectionHeader = styled.div`
  height: 25px;
  margin: 0 2px;
  padding: 1px 0 1px;
  border-top: 1px solid #85bfe3;
  border-bottom: 1px solid #85bfe3;
  display: flex;
  flex: none;
  & { background: linear-gradient(#f0f0f0 0 1px, #82c3ea 1px calc(100% - 1px), #f0f0f0 calc(100% - 1px)); }
  align-items: center;
  justify-content: center;
  font-weight: 700;
  color: #111;
`

const Combo = styled.div`
  flex: none;
  width: 416px;
  height: 22px;
  padding: 0 7px 0 4px;
  display: flex;
  align-items: center;
  justify-content: space-between;
  background: ${p => (p.$tint ? '#fcfcfc' : '#fff')};
  border: 1px solid #d4d4d4;
  border-bottom: 1px solid #b8b8b8;
  border-radius: 2px;
`

const SpinField = styled.div`
  flex: none;
  width: 416px;
  height: 21px;
  padding: 0 1px 0 3px;
  display: flex;
  justify-content: space-between;
  align-items: center;
  background: #fff;
`

const SpinButtons = styled.div`
  flex: none;
  width: 15px;
  display: flex;
  flex-direction: column;
  gap: 1px;
`

const SpinCell = styled.div`
  height: 9px;
  display: flex;
  align-items: center;
  justify-content: center;
  background: #f4f4f4;
  border: 1px solid #c4c4c4;
`

const AxisCell = styled.div`
  flex: none;
  width: ${p => p.$w}px;
  display: flex;
  align-items: center;
`

const AxisName = styled.div`
  width: ${p => (p.$wide ? 34 : 34)}px;
  color: #333;
`

const AxisValue = styled.div`
  flex: 1;
  color: #8a8a8a;
`

const StatusBar = styled.div`
  flex: none;
  height: 16px;
  display: flex;
  align-items: center;
  gap: 3px;
  padding-left: 1484px;
`

const MemoryBar = styled.div`
  position: relative;
  width: 128px;
  height: 16px;
  padding-top: 4px;
  text-align: center;
  overflow: hidden;
  white-space: nowrap;
  background: #f0f0f0;
  border-right: 1px solid #999;
  & > span { position: relative; }
`

const MemoryFill = styled.div`
  position: absolute;
  left: 0;
  top: 0;
  width: 50px;
  height: 100%;
  background: #a0a0a0;
  z-index: -1;
`

const Dialog = styled.div`
  position: absolute;
  left: 718px;
  top: 355px;
  width: 465px;
  height: 591px;
  display: flex;
  flex-direction: column;
  overflow: hidden;
  border-radius: 8px;
  background: #f0f0f0;
  border: 1px solid #b5b5b5;
  box-shadow: 0 10px 32px rgba(0, 0, 0, 0.42);
`

const DialogTitleBar = styled.div`
  flex: none;
  height: 29px;
  padding: 0 10px;
  display: flex;
  align-items: center;
  justify-content: space-between;
  background: #eef3f8;
`

const DialogHeader = styled.div`
  flex: none;
  height: 67px;
  padding: 6px 0 0 5px;
  background:
    radial-gradient(ellipse 85px 46px at 100% 100%, #d8e2f6 0 97%, transparent 100%),
    radial-gradient(ellipse 75px 80px at 100% 100%, #eef2fb 0 97%, transparent 100%),
    #fff;
  border-bottom: 1px solid #a0a0a0;
`

const DialogHeading = styled.div`
  height: 20px;
  font-size: 14px;
  font-weight: 500;
  color: #000;
`

const DialogDesc = styled.div`
  margin: 8px 0 0 8px;
  color: #222;
`

const DialogBody = styled.div`
  flex: 1;
  min-height: 0;
  padding: 0 5px 0 4px;
  display: flex;
  flex-direction: column;
`

const FieldCaption = styled.div`
  flex: none;
  height: ${p => p.$h}px;
  display: flex;
  align-items: center;
  color: #222;
`

const DialogCombo = styled(Combo)`
  width: 454px;
  height: 22px;
`

const SelectedRow = styled.div`
  flex: none;
  height: 31px;
  margin-top: 2px;
  padding-left: 6px;
  display: flex;
  align-items: center;
`

const SelectedField = styled.div`
  flex: none;
  width: 414px;
  height: 21px;
  padding: 2px 5px;
  border-bottom: 1px solid #808080;
  background: #f0f0f0;
  box-shadow: inset 0 0 0 1px #f8f8f8;
`

const ClearButton = styled.div`
  flex: none;
  width: 23px;
  height: 28px;
  margin-left: 6px;
  padding: 1px 2px;
  border: 1px solid #fff;
  border-left: 2px solid #777;
  border-top: 2px solid #777;
  span {
    display: flex;
    height: 100%;
    align-items: center;
    justify-content: center;
    background: #fdfdfd;
    border: 1px solid #d0d0d0;
    border-radius: 3px;
  }
`

const SearchField = styled.div`
  flex: none;
  width: 454px;
  height: 20px;
  padding: 3px 5px;
  background: #fff;
  border-bottom: 2px solid #0067c0;
`

const Cursor = styled.div`
  width: 1px;
  height: 14px;
  background: #000;
`

const DataTable = styled.div`
  flex: none;
  width: 454px;
  height: 273px;
  margin-top: 6px;
  overflow: hidden;
  background: #fff;
  border: 1px solid #7a8694;
`

const TableHead = styled.div`
  height: 26px;
  display: grid;
  grid-template-columns: 226px 1fr;
  align-items: stretch;
`

const TableRow = styled.div`
  height: 19px;
  display: grid;
  grid-template-columns: 226px 1fr;
  border-bottom: ${p => (p.$empty ? 'none' : '1px solid #efefef')};
`

const Cell = styled.div`
  padding-left: ${p => (p.$sep ? 5 : 7)}px;
  display: flex;
  align-items: center;
  color: #222;
  white-space: nowrap;
  border-left: ${p => (p.$sep ? '1px solid #eaf0f6' : 'none')};
`

const DialogFooter = styled.div`
  flex: none;
  height: 57px;
  padding: 20px 6px 0 13px;
  display: flex;
  align-items: flex-start;
  justify-content: space-between;
`

const FooterButtons = styled.div`
  display: flex;
  gap: 9px;
`

const PushButton = styled.div`
  width: 89px;
  height: 23px;
  display: flex;
  align-items: center;
  justify-content: center;
  background: #fdfdfd;
  border: 1px solid ${p => (p.$primary ? '#0067c0' : '#d0d0d0')};
  border-bottom-color: ${p => (p.$primary ? '#0067c0' : '#b8b8b8')};
  border-radius: 4px;
`
